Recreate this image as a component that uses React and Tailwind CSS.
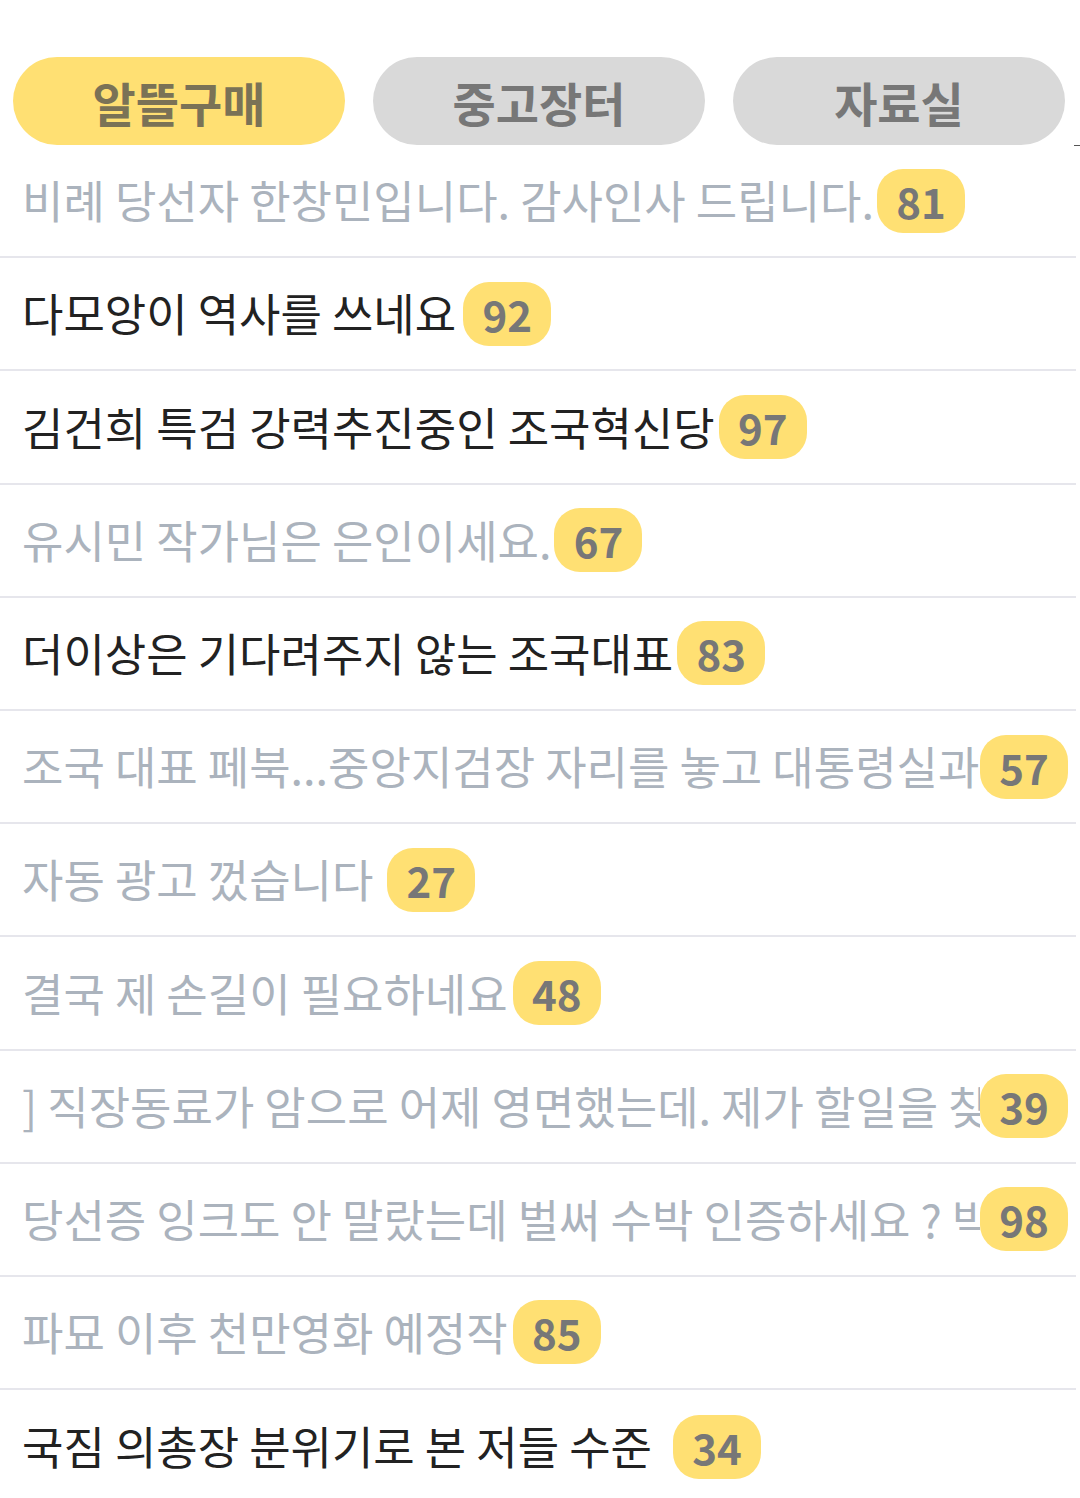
import React from "react";

const rows = [
  { t: "비례 당선자 한창민입니다. 감사인사 드립니다.", n: "81", dark: false, gap: "ml-[3px]" },
  { t: "다모앙이 역사를 쓰네요", n: "92", dark: true, gap: "ml-[7px]" },
  { t: "김건희 특검 강력추진중인 조국혁신당", n: "97", dark: true, gap: "ml-[4px]" },
  { t: "유시민 작가님은 은인이세요.", n: "67", dark: false, gap: "ml-[3px]" },
  { t: "더이상은 기다려주지 않는 조국대표", n: "83", dark: true, gap: "ml-[4px]" },
  { t: "조국 대표 페북...중앙지검장 자리를 놓고 대통령실과 거래하지 않았다", n: "57", dark: false, gap: "ml-0", over: true },
  { t: "자동 광고 껐습니다", n: "27", dark: false, gap: "ml-[14px]" },
  { t: "결국 제 손길이 필요하네요", n: "48", dark: false, gap: "ml-[5px]" },
  { t: "] 직장동료가 암으로 어제 영면했는데. 제가 할일을 찾아봅니다", n: "39", dark: false, gap: "ml-0", over: true },
  { t: "당선증 잉크도 안 말랐는데 벌써 수박 인증하세요 ? 박은정 당선인", n: "98", dark: false, gap: "ml-0", over: true },
  { t: "파묘 이후 천만영화 예정작", n: "85", dark: false, gap: "ml-[5px]" },
  { t: "국짐 의총장 분위기로 본 저들 수준", n: "34", dark: true, gap: "ml-[21px]" },
];

export default function App() {
  return (
    <div
      className="relative w-[1080px] h-[1498px] bg-white overflow-hidden"
      style={{ fontFamily: '"Noto Sans CJK KR", "Noto Sans", sans-serif' }}
    >
      <div className="flex gap-[28px] pl-[13px] pr-[15px] pt-[57px]">
        <div className="flex-1 h-[88px] rounded-full bg-[#ffe073] flex items-center justify-center text-[47px] font-bold text-[#7a7256] leading-none">
          알뜰구매
        </div>
        <div className="flex-1 h-[88px] rounded-full bg-[#d9d9d9] flex items-center justify-center text-[47px] font-bold text-[#777777] leading-none">
          중고장터
        </div>
        <div className="flex-1 h-[88px] rounded-full bg-[#d9d9d9] flex items-center justify-center text-[47px] font-bold text-[#777777] leading-none">
          자료실
        </div>
      </div>
      <div className="absolute left-[1074px] top-[145px] w-[6px] h-[1px] bg-[#555]" />
      <div className="mr-[4px]">
        {rows.map((r, i) => (
          <div
            key={i}
            className={
              "h-[113.2px] flex items-center pl-[22px] pr-[8px] " +
              (i < rows.length - 1 ? "border-b-2 border-[#e6e6ec]" : "")
            }
          >
            <span
              className={
                "whitespace-pre text-[45px] leading-[1.35] " +
                (r.over ? "flex-1 min-w-0 overflow-hidden " : "shrink-0 ") +
                (r.dark ? "text-[#222222]" : "text-[#abb3bd]")
              }
            >
              {r.t}
            </span>
            <span
              className={
                "shrink-0 w-[88px] h-[64px] rounded-[26px] bg-[#ffe073] flex items-center justify-center text-[42px] font-bold text-[#777777] leading-none " +
                r.gap
              }
            >
              {r.n}
            </span>
          </div>
        ))}
      </div>
    </div>
  );
}
